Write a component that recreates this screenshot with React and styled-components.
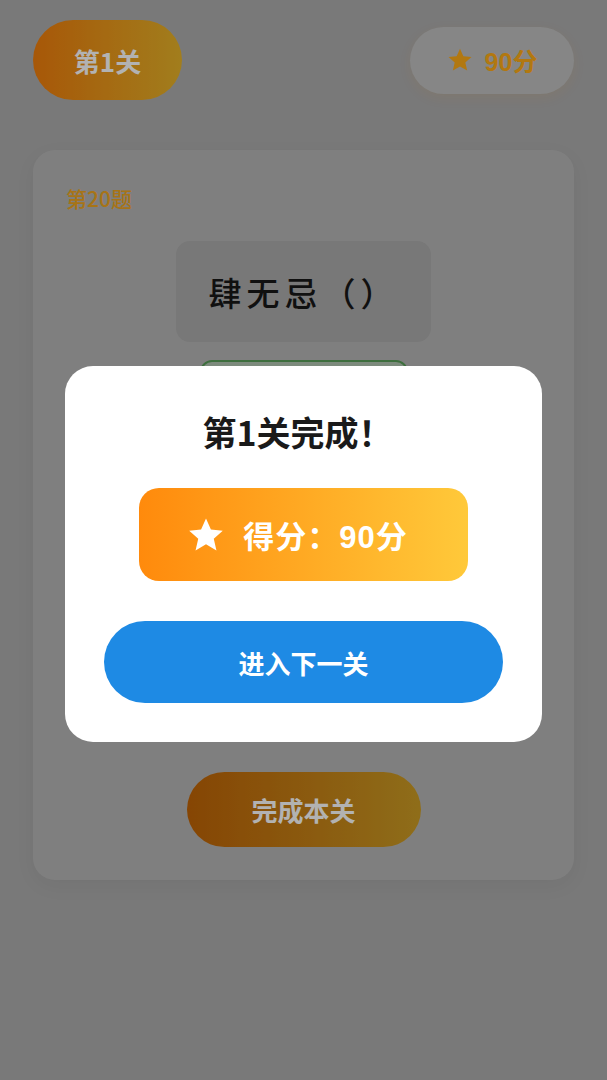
import React from 'react'
import styled, { createGlobalStyle } from 'styled-components'

const GlobalStyle = createGlobalStyle`
  html, body {
    margin: 0;
    padding: 0;
    background: #aeaeae;
  }
  body {
    font-family: "Liberation Sans", "Noto Sans CJK SC", sans-serif;
  }
  * { box-sizing: border-box; }
`

// options sit under the dialog, only the first (correct) one peeks out
const options = [true, false, false, false]

const StarIcon = ({ size, color }) => (
  <svg width={size} height={size} viewBox="0 0 24 24" fill={color}>
    <path d="M12 1.6l3.1 7 7.5.7-5.7 5 1.7 7.5L12 17.9l-6.6 3.9 1.7-7.5-5.7-5 7.5-.7z" />
  </svg>
)

const App = () => {
  return (
    <>
      <GlobalStyle />
      <Page>
        <Header>
          <LevelPill>第1关</LevelPill>
          <ScorePill>
            <StarIcon size={26} color="#ffac17" />
            <span>90分</span>
          </ScorePill>
        </Header>

        <Card>
          <QuestionNo>第20题</QuestionNo>
          <QuestionBox>肆无忌（）</QuestionBox>
          <OptionList>
            {options.map((correct, i) => (
              <Option key={i} correct={correct} />
            ))}
          </OptionList>
          <FinishButton>完成本关</FinishButton>
        </Card>
      </Page>

      <Mask>
        <Modal>
          <ModalTitle>第1关完成！</ModalTitle>
          <ResultBox>
            <StarIcon size={38} color="#ffffff" />
            <span>得分：90分</span>
          </ResultBox>
          <NextButton>进入下一关</NextButton>
        </Modal>
      </Mask>
    </>
  )
}

const Page = styled.div`
  min-height: 1080px;
  padding: 20px 33px;
  background: #aeaeae;
`

const Header = styled.div`
  display: flex;
  align-items: center;
  justify-content: space-between;
  height: 80px;
`

const LevelPill = styled.div`
  width: 149px;
  height: 80px;
  border-radius: 40px;
  background: linear-gradient(90deg, #f07e0c, #e8b42a);
  color: #ffffff;
  font-family: "Noto Sans CJK SC", sans-serif;
  font-size: 26px;
  font-weight: 700;
  display: flex;
  align-items: center;
  justify-content: center;
`

const ScorePill = styled.div`
  width: 164px;
  height: 67px;
  border-radius: 34px;
  background: #c0c0c0;
  box-shadow: 0 4px 12px rgba(255, 170, 40, 0.1);
  display: flex;
  align-items: center;
  justify-content: center;
  gap: 12px;
  color: #ffac17;
  font-size: 25px;
  font-weight: 700;
`

const Card = styled.div`
  margin-top: 50px;
  background: #b7b7b7;
  border-radius: 22px;
  padding: 38px 33px 33px;
  display: flex;
  flex-direction: column;
  align-items: center;
  box-shadow: 0 6px 20px rgba(0, 0, 0, 0.05);
`

const QuestionNo = styled.div`
  align-self: flex-start;
  color: #f0a622;
  font-family: "Noto Sans CJK SC", sans-serif;
  font-size: 21px;
  line-height: 20px;
  font-weight: 500;
`

const QuestionBox = styled.div`
  margin-top: 33px;
  width: 255px;
  height: 101px;
  border-radius: 14px;
  background: #acacac;
  display: flex;
  align-items: center;
  justify-content: center;
  color: #181818;
  font-family: "Noto Sans CJK SC", serif;
  font-size: 33px;
  font-weight: 500;
  letter-spacing: 5px;
`

const OptionList = styled.div`
  margin-top: 18px;
  display: flex;
  flex-direction: column;
  gap: 18px;
`

const Option = styled.div`
  width: 208px;
  height: 70px;
  border-radius: 12px;
  border: 2px solid ${p => (p.correct ? '#5a9f5a' : '#c4c4c4')};
  background: ${p => (p.correct ? '#b3c8b3' : '#bdbdbd')};
`

const FinishButton = styled.div`
  margin-top: 78px;
  width: 234px;
  height: 75px;
  border-radius: 38px;
  background: linear-gradient(90deg, #c06406, #cd9d25);
  color: #ffffff;
  font-family: "Noto Sans CJK SC", serif;
  font-size: 26px;
  font-weight: 700;
  display: flex;
  align-items: center;
  justify-content: center;
`

const Mask = styled.div`
  position: fixed;
  inset: 0;
  background: rgba(0, 0, 0, 0.3);
  padding-top: 366px;
  display: flex;
  justify-content: center;
  align-items: flex-start;
`

const Modal = styled.div`
  width: 477px;
  background: #ffffff;
  border-radius: 28px;
  padding: 45px 0 39px;
  display: flex;
  flex-direction: column;
  align-items: center;
`

const ModalTitle = styled.div`
  color: #1a1a1a;
  font-family: "Noto Sans CJK SC", serif;
  font-size: 34px;
  line-height: 42px;
  font-weight: 700;
  padding-right: 12px;
`

const ResultBox = styled.div`
  margin-top: 35px;
  width: 329px;
  height: 93px;
  border-radius: 20px;
  background: linear-gradient(90deg, #ff8a0c, #ffc93a);
  display: flex;
  align-items: center;
  justify-content: center;
  gap: 18px;
  color: #ffffff;
  font-family: "Liberation Sans", "Noto Sans CJK SC", sans-serif;
  font-size: 31px;
  font-weight: 700;
  letter-spacing: 1px;
  padding-right: 12px;
`

const NextButton = styled.div`
  margin-top: 40px;
  width: 399px;
  height: 82px;
  border-radius: 41px;
  background: #1e8ae4;
  color: #ffffff;
  font-family: "Noto Sans CJK SC", serif;
  font-size: 26px;
  font-weight: 700;
  display: flex;
  align-items: center;
  justify-content: center;
`

export default App
